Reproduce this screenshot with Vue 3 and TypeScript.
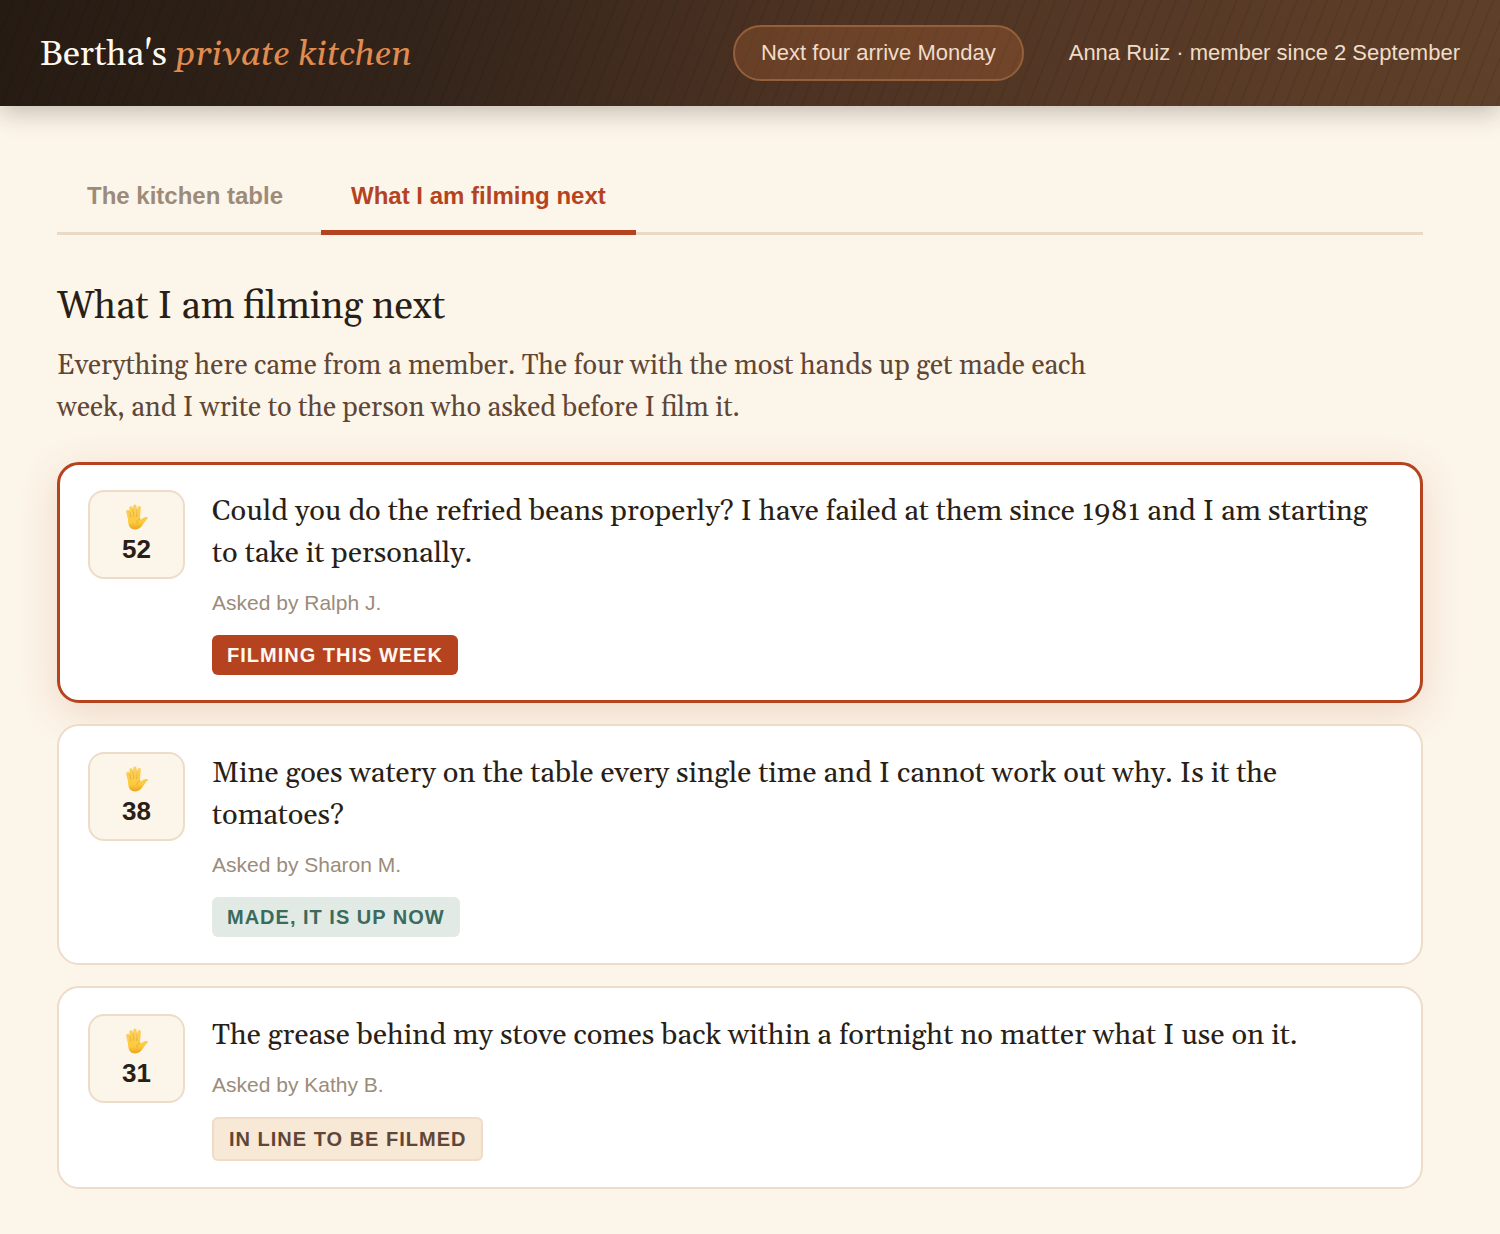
<script setup lang="ts">
import { ref } from 'vue'

type Status = 'filming' | 'made' | 'queued'

interface Ask {
  id: number
  hands: number
  question: string
  by: string
  status: Status
}

const tabs = ['The kitchen table', 'What I am filming next']
const activeTab = ref(1)

const statusLabels: Record<Status, string> = {
  filming: 'Filming this week',
  made: 'Made, it is up now',
  queued: 'In line to be filmed',
}

const asks = ref<Ask[]>([
  {
    id: 1,
    hands: 52,
    question:
      'Could you do the refried beans properly? I have failed at them since 1981 and I am starting to take it personally.',
    by: 'Ralph J.',
    status: 'filming',
  },
  {
    id: 2,
    hands: 38,
    question:
      'Mine goes watery on the table every single time and I cannot work out why. Is it the tomatoes?',
    by: 'Sharon M.',
    status: 'made',
  },
  {
    id: 3,
    hands: 31,
    question: 'The grease behind my stove comes back within a fortnight no matter what I use on it.',
    by: 'Kathy B.',
    status: 'queued',
  },
])
</script>

<template>
  <div class="page">
    <header class="topbar">
      <div class="brand">Bertha's <em>private kitchen</em></div>
      <div class="account">
        <span class="pill">Next four arrive Monday</span>
        <span>Anna Ruiz · member since 2 September</span>
      </div>
    </header>

    <main class="content">
      <div class="tabs" role="tablist">
        <button
          v-for="(tab, i) in tabs"
          :key="tab"
          type="button"
          role="tab"
          class="tab"
          :class="{ active: i === activeTab }"
          :aria-selected="i === activeTab"
          @click="activeTab = i"
        >
          {{ tab }}
        </button>
      </div>

      <h1 class="title">What I am filming next</h1>
      <p class="lead">
        Everything here came from a member. The four with the most hands up get made each week, and I
        write to the person who asked before I film it.
      </p>

      <ul class="asks">
        <li v-for="ask in asks" :key="ask.id" class="card" :class="ask.status">
          <button type="button" class="vote" aria-label="Put a hand up" @click="ask.hands++">
            <svg class="hand" viewBox="0 0 24 26" aria-hidden="true">
              <defs>
                <linearGradient
                  :id="'skin' + ask.id"
                  gradientUnits="userSpaceOnUse"
                  x1="0"
                  y1="0"
                  x2="0"
                  y2="26"
                >
                  <stop offset="0" stop-color="#fbd062" />
                  <stop offset="0.7" stop-color="#fccb3c" />
                  <stop offset="1" stop-color="#e9a01f" />
                </linearGradient>
              </defs>
              <g :stroke="'url(#skin' + ask.id + ')'" stroke-width="3.4" stroke-linecap="round">
                <path d="M2.800 7.600 L5.200 16" />
                <path d="M6 4 L7.600 15" />
                <path d="M9.900 2.200 L10.300 15" />
                <path d="M14.200 3.800 L13.200 15" />
              </g>
              <path
                :fill="'url(#skin' + ask.id + ')'"
                d="M2.600 12 L14.900 11 L15 14.600 C15.200 15.700 16 15.700 16.700 15 L18.800 13.500 C20.400 12.500 22.600 12.800 23 13.700 C23.200 14.400 22.300 14.900 21.600 15.500 L17.800 20.600 C16.200 23.600 13.800 25.500 10.200 25.500 C6 25.500 3.800 22.700 3.300 19 Z"
              />
              <g
                fill="none"
                stroke="#e09a26"
                stroke-width="0.7"
                stroke-linecap="round"
                opacity="0.8"
              >
                <path d="M4.700 7.500 L5.900 13" />
                <path d="M8 5 L8.900 12.500" />
                <path d="M12 5 L11.800 12.500" />
                <path d="M15 14.800 C12.800 15.500 12 17 12 19" />
              </g>
            </svg>
            <span class="count">{{ ask.hands }}</span>
          </button>
          <div class="body">
            <p class="question">{{ ask.question }}</p>
            <p class="by">Asked by {{ ask.by }}</p>
            <span class="badge">{{ statusLabels[ask.status] }}</span>
          </div>
        </li>
      </ul>
    </main>
  </div>
</template>

<style>
body {
  margin: 0;
  background: #fcf5e9;
}
</style>

<style scoped>
.page {
  --serif: Georgia, Gelasio, 'Liberation Serif', serif;
  --sans: 'Liberation Sans', Arial, sans-serif;
  --ink: #2a1f17;
  --rust: #b5431f;
  --line: #eedcc9;
  font-family: var(--sans);
  color: var(--ink);
}

.topbar {
  display: flex;
  align-items: center;
  justify-content: space-between;
  height: 106px;
  box-sizing: border-box;
  padding: 0 40px;
  background:
    repeating-linear-gradient(112deg, transparent 0 11px, rgba(0, 0, 0, 0.09) 13px, transparent 14px),
    linear-gradient(100deg, #261b13 0%, #33241a 28%, #4e3323 55%, #5f4029 100%);
  box-shadow: 0 6px 24px rgba(42, 31, 23, 0.28);
}

.brand {
  padding-top: 4px;
  font-family: var(--serif);
  font-size: 35px;
  line-height: 48px;
  color: #fff8ef;
}

.brand em {
  color: #e08b50;
}

.account {
  display: flex;
  align-items: center;
  gap: 45px;
  font-size: 22px;
  line-height: 32px;
  color: #f0dcc8;
}

.pill {
  padding: 10px 26px;
  border: 2px solid #93603b;
  border-radius: 28px;
  background: rgba(200, 110, 55, 0.25);
}

.content {
  padding: 53px 77px 46px 57px;
}

.tabs {
  display: flex;
  gap: 8px;
  box-shadow: inset 0 -3px 0 #ead9c4;
}

.tab {
  padding: 19px 30px 17px;
  border: 0;
  border-bottom: 5px solid transparent;
  background: none;
  font: 700 24px/35px var(--sans);
  color: #9c8b79;
  cursor: pointer;
}

.tab.active {
  border-bottom-color: var(--rust);
  color: var(--rust);
}

.title {
  margin: 46px 0 0;
  font: 400 38px/52px var(--serif);
}

.lead {
  max-width: 1050px;
  margin: 12px 0 0;
  font: 400 27px/42px var(--serif);
  color: #5f4636;
}

.asks {
  display: flex;
  flex-direction: column;
  gap: 21px;
  margin: 33px 0 0;
  padding: 0;
  list-style: none;
}

.card {
  display: flex;
  align-items: flex-start;
  gap: 27px;
  padding: 26px 29px;
  border: 2px solid var(--line);
  border-radius: 22px;
  background: #fff;
}

.card.filming {
  padding: 25px 28px;
  border: 3px solid var(--rust);
  box-shadow: 0 10px 40px rgba(165, 70, 35, 0.16);
}

.vote {
  display: flex;
  flex: none;
  flex-direction: column;
  align-items: center;
  width: 97px;
  height: 89px;
  padding: 12px 0 0;
  border: 2px solid var(--line);
  border-radius: 16px;
  background: #fcf5e9;
  font-family: var(--sans);
  color: var(--ink);
  cursor: pointer;
}

.hand {
  width: 24px;
  height: 26px;
}

.count {
  font-size: 26px;
  font-weight: 700;
  line-height: 38px;
}

.body {
  flex: 1;
  min-width: 0;
}

.question {
  margin: 0;
  padding-top: 1px;
  font: 400 29px/42px var(--serif);
}

.by {
  margin: 13px 0 17px;
  font-size: 21px;
  line-height: 30px;
  color: #9c8b79;
}

.badge {
  display: block;
  width: fit-content;
  padding: 5px 15px;
  border-radius: 6px;
  font-size: 20px;
  font-weight: 700;
  line-height: 30px;
  letter-spacing: 1px;
  text-transform: uppercase;
}

.filming .badge {
  background: var(--rust);
  color: #fff8ef;
}

.made .badge {
  background: #e2eae6;
  color: #3a6b5c;
}

.queued .badge {
  border: 2px solid var(--line);
  background: #f8e8d6;
  color: #5f4636;
}
</style>
